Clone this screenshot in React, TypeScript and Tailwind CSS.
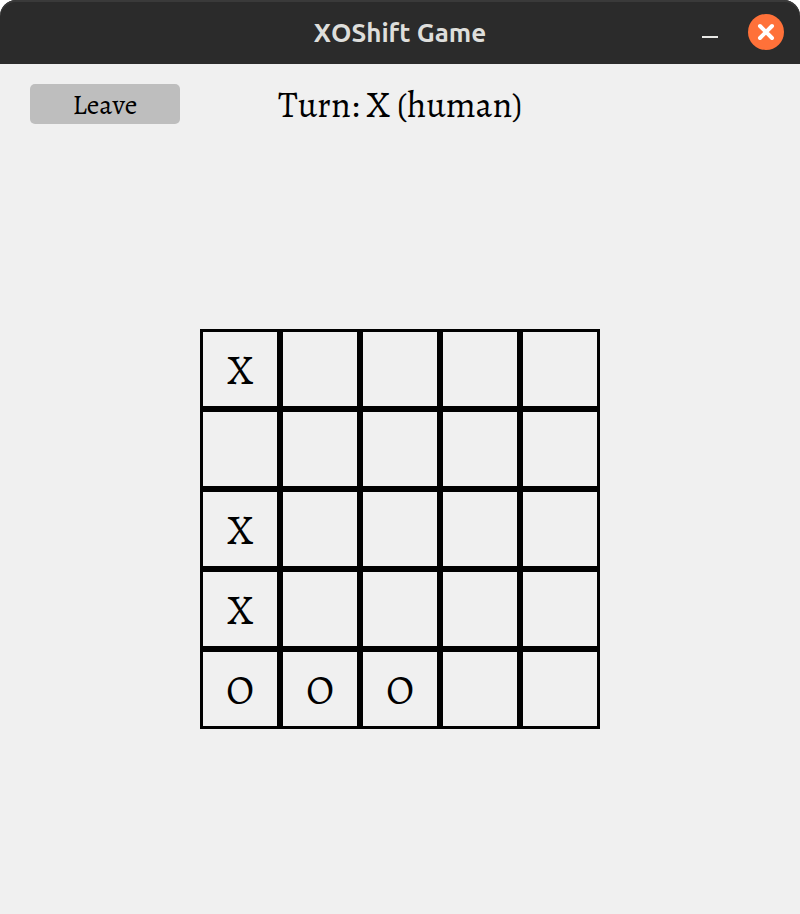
import { useState } from "react";

type Mark = "X" | "O" | "";

const START: Mark[][] = [
  ["X", "", "", "", ""],
  ["", "", "", "", ""],
  ["X", "", "", "", ""],
  ["X", "", "", "", ""],
  ["O", "O", "O", "", ""],
];

function TitleBar() {
  return (
    <header className="grid h-16 grid-cols-[1fr_auto_1fr] items-center rounded-t-2xl bg-[#2b2b2b] px-4 font-['Ubuntu','Noto_Sans',sans-serif] shadow-[inset_0_2px_0_#3a3a3a]">
      <h1 className="col-start-2 pt-0.5 text-[26px] leading-9 font-bold text-[#dededb]">XOShift Game</h1>
      <div className="flex items-center justify-end gap-5">
        <button type="button" aria-label="Minimize" className="flex size-9 items-center justify-center">
          <svg viewBox="0 0 36 36" className="size-9" aria-hidden="true">
            <path d="M10 22h16v2H10z" fill="#e8e8e5" />
          </svg>
        </button>
        <button type="button" aria-label="Close" className="size-9 rounded-full bg-[#ff7139]">
          <svg viewBox="0 0 36 36" className="size-9" aria-hidden="true">
            <path d="M12 12l12 12M24 12L12 24" stroke="#fff" strokeWidth="4" strokeLinecap="round" />
          </svg>
        </button>
      </div>
    </header>
  );
}

export default function App() {
  const [board] = useState<Mark[][]>(START);
  return (
    <div className="flex min-h-screen flex-col bg-white font-['Alegreya','Liberation_Serif',serif] text-black [font-kerning:none]">
      <TitleBar />
      <main className="flex flex-1 flex-col bg-[#f0f0f0]">
        <div className="grid h-20 grid-cols-[1fr_auto_1fr] items-center px-[30px]">
          <button type="button" className="h-10 w-[150px] rounded-[5px] bg-[#bebebe] pt-0.5 text-[28px] leading-9">
            Leave
          </button>
          <p className="pt-0.5 text-4xl">Turn: X (human)</p>
        </div>
        <div className="flex flex-1 items-center justify-center">
          <div className="grid grid-cols-5" role="group" aria-label="Board">
            {board.map((row, r) =>
              row.map((mark, c) => (
                <button
                  key={`${r}-${c}`}
                  type="button"
                  aria-label={`Row ${r + 1}, column ${c + 1}`}
                  className="flex size-20 items-center justify-center border-3 border-black pt-1 text-[40px]"
                >
                  {mark}
                </button>
              )),
            )}
          </div>
        </div>
      </main>
    </div>
  );
}
